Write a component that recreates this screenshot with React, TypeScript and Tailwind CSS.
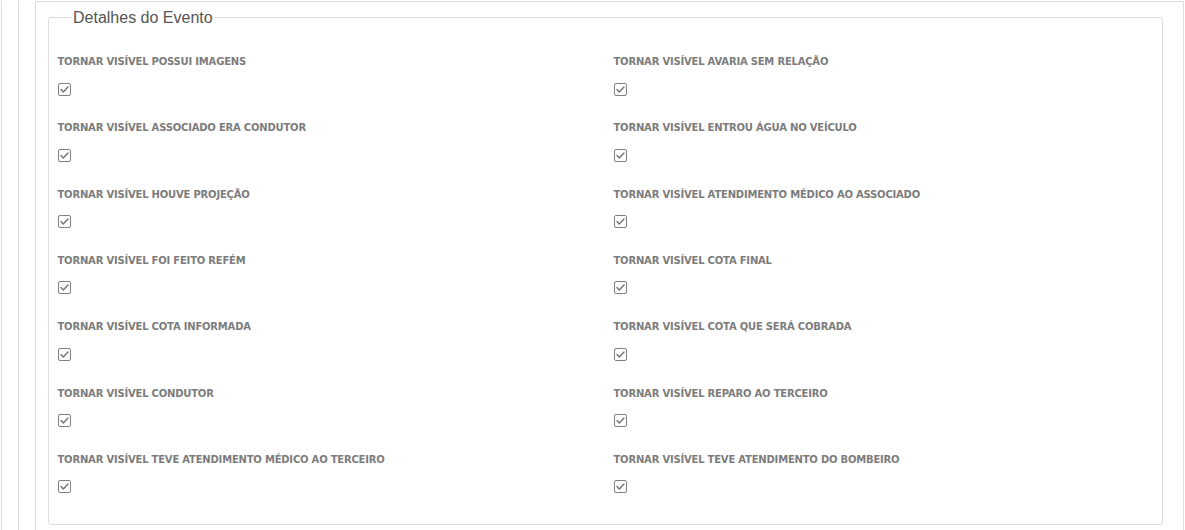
const fields: string[] = [
  'Tornar visível possui imagens',
  'Tornar visível avaria sem relação',
  'Tornar visível associado era condutor',
  'Tornar visível entrou água no veículo',
  'Tornar visível houve projeção',
  'Tornar visível atendimento médico ao associado',
  'Tornar visível foi feito refém',
  'Tornar visível cota final',
  'Tornar visível cota informada',
  'Tornar visível cota que será cobrada',
  'Tornar visível condutor',
  'Tornar visível reparo ao terceiro',
  'Tornar visível teve atendimento médico ao terceiro',
  'Tornar visível teve atendimento do bombeiro',
]

function CheckedBox() {
  return (
    <svg width="13" height="13" viewBox="0 0 13 13" className="block">
      <rect x="0.5" y="0.5" width="12" height="12" rx="1.5" fill="#fdfdfd" stroke="#818181" />
      <polyline
        points="3,6.6 5.3,8.9 10,4.1"
        fill="none"
        stroke="#747474"
        strokeWidth="1.4"
        strokeLinecap="round"
        strokeLinejoin="round"
      />
    </svg>
  )
}

function FieldToggle({ label }: { label: string }) {
  return (
    <div className="h-[66.33px]">
      <label className="block font-['DejaVu_Sans',sans-serif] text-[10px] font-bold uppercase leading-[15px] tracking-[-0.2px] text-[#7c7c7c]">
        {label}
      </label>
      <div className="mt-[13.5px]">
        <CheckedBox />
      </div>
    </div>
  )
}

export default function App() {
  return (
    <div className="mx-px flex h-[530px] bg-white pt-px">
      <div className="flex flex-1 border-l border-[#dcdce8] pl-4">
        <div className="flex flex-1 border-l border-[#dddddd] pl-4">
          <div className="flex-1 border-l border-r border-t border-[#dddddd] pl-[12px] pr-[20px] pt-[5px]">
            <fieldset className="rounded-[3px] border border-[#dddddd] pb-[6px] pl-[8.5px]">
              <legend className="ml-[13.5px] px-[2px] font-['Liberation_Sans',Arial,sans-serif] text-[16px] leading-[21px] text-[#555555]">
                Detalhes do Evento
              </legend>
              <div className="grid grid-cols-[556px_1fr] pt-[26px]">
                {fields.map((field) => (
                  <FieldToggle key={field} label={field} />
                ))}
              </div>
            </fieldset>
          </div>
        </div>
      </div>
    </div>
  )
}
